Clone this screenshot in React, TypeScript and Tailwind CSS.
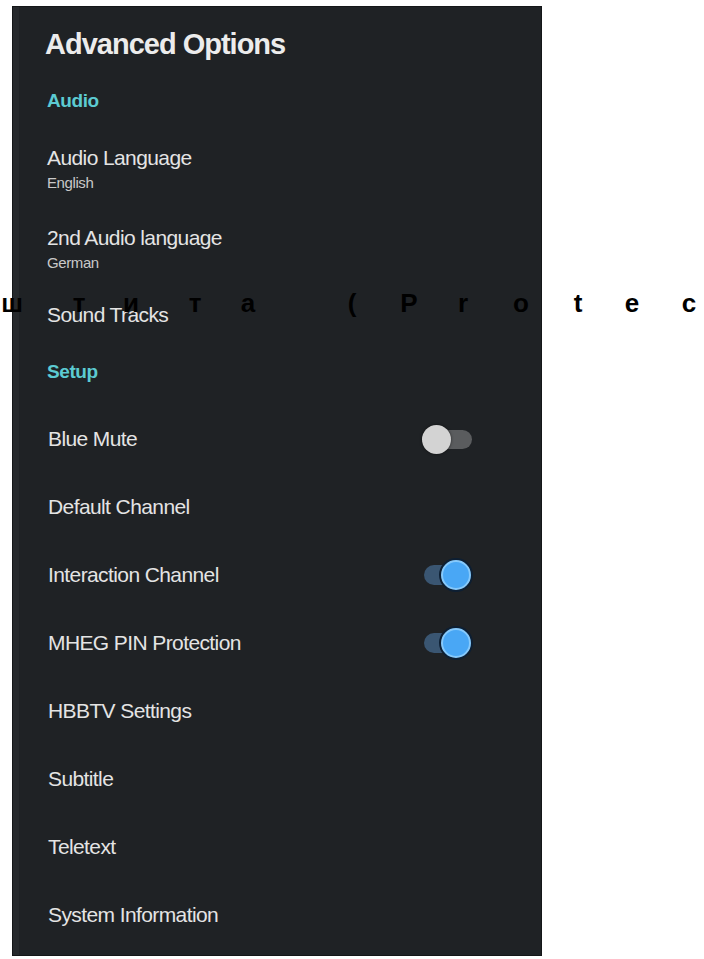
import React from 'react';

type Toggle = 'on' | 'off' | null;

const audioItems = [
  { label: 'Audio Language', value: 'English' },
  { label: '2nd Audio language', value: 'German' },
];

const setupItems: { label: string; toggle: Toggle }[] = [
  { label: 'Blue Mute', toggle: 'off' },
  { label: 'Default Channel', toggle: null },
  { label: 'Interaction Channel', toggle: 'on' },
  { label: 'MHEG PIN Protection', toggle: 'on' },
  { label: 'HBBTV Settings', toggle: null },
  { label: 'Subtitle', toggle: null },
  { label: 'Teletext', toggle: null },
  { label: 'System Information', toggle: null },
];

// spaced-out caption letters, x = glyph centre
const caption: [string, number][] = [
  ['ш', 12],
  ['т', 79],
  ['и', 131],
  ['т', 195],
  ['а', 248],
  ['(', 352],
  ['P', 409],
  ['r', 463],
  ['o', 521],
  ['t', 578],
  ['e', 632],
  ['c', 689],
];

function Switch({ on }: { on: boolean }) {
  return (
    <div className="relative w-[50px] h-[30px] flex items-center">
      <div
        className={
          on
            ? 'absolute left-[2px] right-[4px] h-[20px] rounded-full bg-[#3a5672]'
            : 'absolute left-[4px] right-0 h-[19px] rounded-full bg-[#5a5c5e]'
        }
      />
      {on ? (
        <div className="absolute right-[1px] w-[30px] h-[30px] rounded-full bg-[#49a7f5] border-2 border-[#86c9fb] shadow-[0_0_0_2px_#0d1f33]" />
      ) : (
        <div className="absolute left-0 w-[29px] h-[29px] rounded-full bg-[#d3d3d3] shadow-[0_0_3px_rgba(0,0,0,0.6)]" />
      )}
    </div>
  );
}

export default function App() {
  return (
    <div className="relative w-[704px] h-[959px] bg-white overflow-hidden font-['Liberation_Sans',Arial,sans-serif]">
      <div className="ml-[12px] mt-[6px] w-[530px] h-[950px] bg-[#1f2225] border border-[#141618] shadow-[inset_6px_0_0_#26292c] pl-[34px] pt-[19px]">
        <h1 className="-ml-[2px] h-[36px] leading-[36px] text-[29px] font-bold tracking-[-1px] text-[#ececec]">
          Advanced Options
        </h1>

        {/* Audio */}
        <div className="mt-[27px] h-[24px] leading-[24px] text-[19px] font-bold tracking-[-0.4px] text-[#5ccbd2]">
          Audio
        </div>
        <div className="mt-[32px] flex flex-col gap-[33px]">
          {audioItems.map((item) => (
            <div key={item.label} className="flex flex-col">
              <span className="h-[26px] leading-[26px] text-[21px] tracking-[-0.6px] text-[#e4e4e4]">
                {item.label}
              </span>
              <span className="mt-[3px] h-[18px] leading-[18px] text-[15px] tracking-[-0.4px] text-[#c9c9c9]">
                {item.value}
              </span>
            </div>
          ))}
        </div>
        <div className="mt-[30px] h-[26px] leading-[26px] text-[21px] tracking-[-0.6px] text-[#e4e4e4]">
          Sound Tracks
        </div>

        {/* Setup */}
        <div className="mt-[32px] h-[24px] leading-[24px] text-[19px] font-bold tracking-[-0.4px] text-[#5ccbd2]">
          Setup
        </div>
        <div className="mt-[21px] flex flex-col">
          {setupItems.map((item) => (
            <div key={item.label} className="h-[68px] flex items-center justify-between pl-[1px] pr-[69px]">
              <span className="text-[21px] tracking-[-0.6px] text-[#e4e4e4]">{item.label}</span>
              {item.toggle && <Switch on={item.toggle === 'on'} />}
            </div>
          ))}
        </div>
      </div>

      {/* caption running across the page */}
      <div className="absolute left-0 top-[290px] w-full h-[28px] pointer-events-none">
        {caption.map(([ch, x], i) => (
          <span
            key={i}
            className="absolute top-0 w-[30px] -ml-[15px] text-center text-[26px] leading-[26px] font-bold text-black"
            style={{ left: x }}
          >
            {ch}
          </span>
        ))}
      </div>
    </div>
  );
}
